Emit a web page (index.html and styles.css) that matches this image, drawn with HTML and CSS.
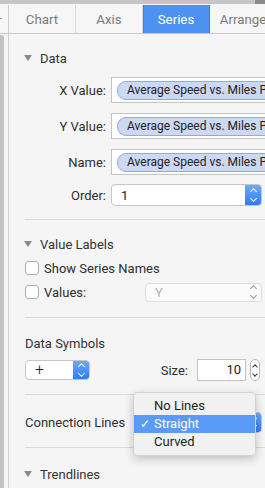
FILE: index.html
```html
<!DOCTYPE html>
<html lang="en">
<head>
  <meta charset="UTF-8" />
  <title>Series Inspector</title>
  <meta name="viewport" content="width=device-width,initial-scale=1"/>
  <link rel="stylesheet" href="styles.css">
</head>
<body>
  <div class="topbar"><div class="topbar-end"></div></div>
  <div class="tabs">
    <div class="tab-gutter"><span class="dash"></span></div>
    <div class="tab">Chart</div>
    <div class="tab">Axis</div>
    <div class="tab active">Series</div>
    <div class="tab">Arrange</div>
  </div>
  <div class="main">
    <div class="gutter"><div class="gutter-bar"></div></div>
    <div class="panel">

      <div class="section-head first"><span class="tri"></span>Data</div>
      <div class="form">
        <div class="flabel">X Value:</div>
        <div class="token-box"><span class="token">Average Speed vs. Miles Per Gallon</span></div>
        <div class="flabel">Y Value:</div>
        <div class="token-box"><span class="token">Average Speed vs. Miles Per Gallon</span></div>
        <div class="flabel">Name:</div>
        <div class="token-box"><span class="token">Average Speed vs. Miles Per Gallon</span></div>
        <div class="flabel">Order:</div>
        <div class="popup order">
          <span class="popup-text">1</span>
          <span class="stepper blue"><i class="up"></i><i class="down"></i></span>
        </div>
      </div>
      <div class="sep sep-a"></div>

      <div class="section-head vl"><span class="tri"></span>Value Labels</div>
      <div class="check-row r1"><span class="box"></span>Show Series Names</div>
      <div class="check-row r2">
        <span class="box"></span>Values:
        <div class="popup disabled">
          <span class="popup-text">Y</span>
          <span class="stepper grey"><i class="up"></i><i class="down"></i></span>
        </div>
      </div>
      <div class="sep sep-b"></div>

      <div class="plain-head">Data Symbols</div>
      <div class="symbol-row">
        <div class="popup symbol">
          <span class="popup-text">+</span>
          <span class="stepper blue"><i class="up"></i><i class="down"></i></span>
        </div>
        <div class="size-group">
          <span class="size-label">Size:</span>
          <div class="num-field">10</div>
          <span class="mini-stepper"><i class="up"></i><i class="down"></i></span>
        </div>
      </div>
      <div class="sep sep-c"></div>

      <div class="conn-row">
        <span>Connection Lines</span>
        <div class="popup conn">
          <span class="popup-text">Straight</span>
          <span class="stepper blue"><i class="up"></i><i class="down"></i></span>
        </div>
        <div class="menu">
          <div class="menu-item">No Lines</div>
          <div class="menu-item selected"><span class="check">✓</span>Straight</div>
          <div class="menu-item">Curved</div>
        </div>
      </div>
      <div class="sep sep-d"></div>

      <div class="section-head tl"><span class="tri"></span>Trendlines</div>
    </div>
  </div>
</body>
</html>
```

FILE: styles.css
```css
html, body {
  margin: 0;
  height: 100%;
}
body {
  background: #f5f5f5;
  font-family: Roboto, 'Liberation Sans', sans-serif;
  font-size: 12.5px;
  color: #2e2e2e;
  overflow: hidden;
}
.topbar {
  height: 4px;
  background: #c6c6c6;
  display: flex;
  justify-content: flex-end;
}
.topbar-end {
  width: 10px;
  background: #8c8c8c;
}
.tabs {
  display: flex;
  height: 28px;
  padding-top: 1px;
  background: #f6f6f6;
  border-bottom: 1px solid #c9c9c9;
  box-sizing: content-box;
}
.tab-gutter {
  width: 8px;
  flex: none;
  border-right: 1px solid #cdcdcd;
  position: relative;
}
.dash {
  position: absolute;
  left: 0;
  top: 13px;
  width: 2px;
  height: 1px;
  background: #999;
}
.tab {
  width: 66px;
  flex: none;
  border-right: 1px solid #dadada;
  display: flex;
  align-items: center;
  justify-content: center;
  font-size: 13.3px;
  color: #7b7b7b;
}
.tab.active {
  background: #4d92f3;
  color: #fff;
  border-right-color: #3b7fe4;
  box-shadow: inset 1px 0 0 #3b7fe4;
}
.main {
  display: flex;
  height: calc(100% - 34px);
}
.gutter {
  width: 8px;
  flex: none;
  border-right: 1px solid #cfcfcf;
  background: #f4f4f4;
}
.gutter-bar {
  width: 4px;
  height: 100%;
  margin-top: 1px;
  background: #c2c2c2;
  border-radius: 0 3px 0 0;
}
.panel {
  flex: 1;
  padding-left: 16px;
  overflow: hidden;
  background: #f5f5f5;
}

/* headers */
.section-head, .plain-head {
  height: 20px;
  display: flex;
  align-items: center;
  font-size: 13px;
  color: #333;
}
.section-head.first { margin-top: 14px; }
.section-head.vl { margin-top: 14px; }
.section-head.tl { margin-top: 16px; }
.plain-head { margin-top: 15px; }
.tri {
  width: 0;
  height: 0;
  margin-left: -1px;
  margin-right: 8px;
  border-left: 4px solid transparent;
  border-right: 4px solid transparent;
  border-top: 6px solid #8a8a8a;
}

/* data form */
.form {
  display: grid;
  grid-template-columns: 81px 1fr;
  column-gap: 5px;
  row-gap: 10px;
  margin-top: 9px;
  align-items: center;
}
.flabel {
  text-align: right;
  font-size: 13px;
}
.token-box {
  height: 26px;
  background: #fff;
  border: 1px solid #c3c3c3;
  box-sizing: border-box;
  margin-right: -20px;
  display: flex;
  align-items: center;
  padding-left: 5px;
  overflow: hidden;
  white-space: nowrap;
}
.token {
  height: 17px;
  line-height: 17px;
  padding-left: 9px;
  padding-right: 10px;
  background: #cdd8f3;
  border: 1px solid #92a9e6;
  border-radius: 9px;
  font-size: 12px;
  color: #222;
}

/* popups */
.popup {
  position: relative;
  background: #fff;
  border: 1px solid #c6c6c6;
  border-radius: 4px;
  box-sizing: border-box;
  display: flex;
  align-items: center;
  overflow: hidden;
}
.popup-text {
  flex: 1;
  padding-left: 9px;
  font-size: 13px;
  color: #222;
}
.popup.order {
  height: 22px;
  margin-right: 3px;
  margin-top: -1px;
}
.stepper {
  width: 16px;
  align-self: stretch;
  display: flex;
  flex-direction: column;
  align-items: center;
  justify-content: center;
  gap: 2px;
}
.stepper.blue {
  background: linear-gradient(#6eaafb, #2f7bf5);
}
.stepper i, .mini-stepper i {
  display: block;
  width: 4px;
  height: 4px;
  border-left: 1.3px solid #fff;
  border-top: 1.3px solid #fff;
}
.stepper i.up, .mini-stepper i.up { transform: rotate(45deg); margin-top: 2px; }
.stepper i.down, .mini-stepper i.down { transform: rotate(225deg); margin-bottom: 2px; }
.stepper.grey i { border-color: #9a9a9a; }

/* separators */
.sep {
  height: 1px;
  background: #dadada;
}
.sep-a { margin-top: 13px; }
.sep-b { margin-top: 15px; }
.sep-c { margin-top: 13px; }
.sep-d { margin-top: 14px; }

/* value labels */
.check-row {
  height: 20px;
  display: flex;
  align-items: center;
  font-size: 13px;
}
.check-row.r1 { margin-top: 4px; }
.check-row.r2 { margin-top: 4px; }
.box {
  width: 14px;
  height: 14px;
  box-sizing: border-box;
  background: #fff;
  border: 1px solid #adadad;
  border-radius: 3px;
  margin-right: 5px;
}
.popup.disabled {
  margin-left: auto;
  margin-right: 3px;
  width: 117px;
  height: 19px;
  border-color: #dedede;
  background: #fbfbfb;
}
.popup.disabled .popup-text { color: #b2b2b2; }

/* data symbols */
.symbol-row {
  margin-top: 6px;
  height: 22px;
  display: flex;
  align-items: center;
}
.popup.symbol {
  width: 65px;
  height: 20px;
}
.popup.symbol .popup-text {
  padding-left: 9px;
  font-size: 16px;
  font-weight: 300;
  line-height: 18px;
}
.size-group {
  margin-left: auto;
  margin-right: 5px;
  display: flex;
  align-items: center;
}
.size-label {
  font-size: 13px;
  margin-right: 9px;
}
.num-field {
  width: 49px;
  height: 22px;
  box-sizing: border-box;
  background: #fff;
  border: 1px solid #c3c3c3;
  text-align: right;
  padding-right: 4px;
  line-height: 20px;
  font-size: 13px;
  color: #222;
}
.mini-stepper {
  width: 10px;
  height: 22px;
  margin-left: 4px;
  box-sizing: border-box;
  background: #fff;
  border: 1px solid #b8b8b8;
  border-radius: 5px;
  display: flex;
  flex-direction: column;
  align-items: center;
  justify-content: center;
  gap: 3px;
}
.mini-stepper i {
  width: 3px;
  height: 3px;
  border-color: #333;
}

/* connection lines */
.conn-row {
  position: relative;
  margin-top: 16px;
  height: 22px;
  display: flex;
  align-items: center;
  font-size: 13px;
}
.popup.conn {
  margin-left: auto;
  margin-right: 3px;
  width: 117px;
  height: 21px;
}
.menu {
  position: absolute;
  left: 108px;
  top: -19px;
  width: 123px;
  padding: 4px 0;
  box-sizing: border-box;
  background: rgba(241,241,241,0.98);
  border: 1px solid #d2d2d2;
  border-radius: 5px;
  box-shadow: 0 3px 10px rgba(0,0,0,0.22);
}
.menu-item {
  position: relative;
  height: 18px;
  line-height: 18px;
  padding-left: 20px;
  font-size: 13px;
  color: #1e1e1e;
}
.menu-item.selected {
  background: #5a9bf8;
  color: #fff;
}
.check {
  position: absolute;
  left: 6px;
  top: 0;
  font-size: 12px;
}
```
